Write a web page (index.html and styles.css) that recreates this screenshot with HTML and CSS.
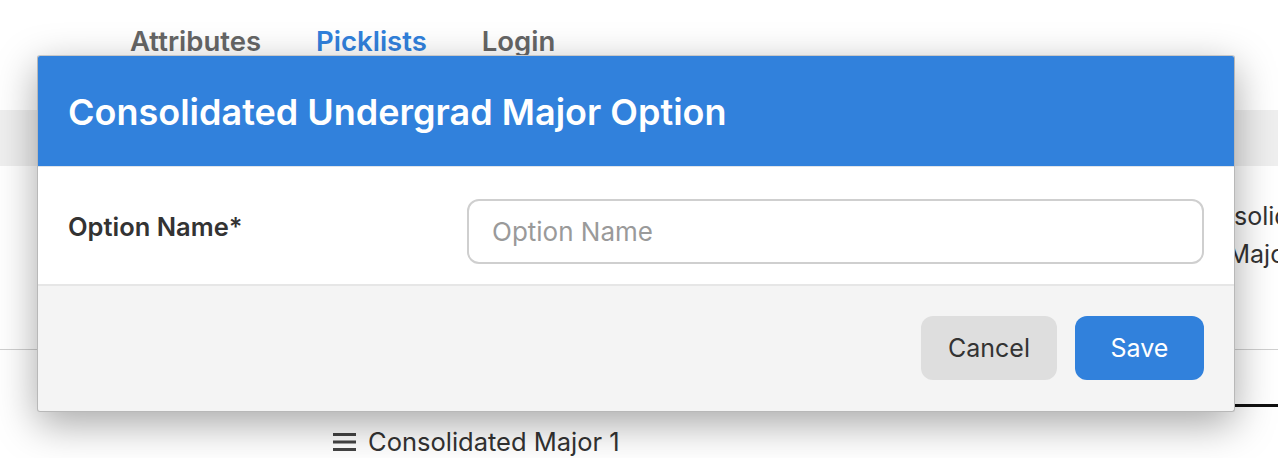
FILE: index.html
```html
<!DOCTYPE html>
<html>
<head>
<meta charset="utf-8">
<link rel="stylesheet" href="styles.css">
</head>
<body>
<div class="page">
  <nav class="tabs">
    <span class="tab">Attributes</span>
    <span class="tab active">Picklists</span>
    <span class="tab">Login</span>
  </nav>
  <div class="band"></div>
  <div class="rows">
    <div class="row row-top">
      <div class="cell-right">Consolidated<br>Major</div>
    </div>
    <div class="row row-mid"></div>
    <div class="row row-bottom">
      <div class="item">
        <svg class="burger" width="23" height="20" viewBox="0 0 23 20"><rect x="0" y="1" width="23" height="3" fill="#444"/><rect x="0" y="8.5" width="23" height="3" fill="#444"/><rect x="0" y="16" width="23" height="3" fill="#444"/></svg>
        Consolidated Major 1
      </div>
    </div>
  </div>

  <div class="modal">
    <div class="modal-header">
      <h1 class="modal-title">Consolidated Undergrad Major Option</h1>
    </div>
    <div class="modal-body">
      <label class="field-label">Option Name*</label>
      <input class="field-input" type="text" placeholder="Option Name">
    </div>
    <div class="modal-footer">
      <button class="btn btn-cancel">Cancel</button>
      <button class="btn btn-save">Save</button>
    </div>
  </div>
</div>
</body>
</html>
```

FILE: styles.css
```css
* { box-sizing: border-box; }
html, body { margin: 0; padding: 0; }
body {
  background: #fff;
  font-family: Inter, "Noto Sans", sans-serif;
  color: #333;
  width: 1278px;
  height: 458px;
  overflow: hidden;
}
.page {
  position: relative;
  width: 1278px;
  height: 458px;
}
.tabs {
  display: flex;
  gap: 55px;
  padding: 23px 0 0 130px;
  height: 110px;
}
.tab {
  font-size: 27.5px;
  font-weight: 600;
  color: #666;
  line-height: 36px;
}
.tab.active { color: #3181dc; }
.band {
  height: 56px;
  background: #efefef;
}
.rows {
  display: flex;
  flex-direction: column;
}
.row-top {
  height: 184px;
  border-bottom: 1px solid #d0d0d0;
  display: flex;
  justify-content: flex-end;
}
.cell-right {
  width: 150px;
  margin-right: -58px;
  padding-top: 31px;
  text-align: center;
  font-size: 25px;
  line-height: 38px;
  color: #333;
  white-space: nowrap;
}
.row-mid {
  height: 57px;
  border-bottom: 3px solid #111;
  margin-left: 1234px;
}
.row-bottom {
  padding: 18px 0 0 333px;
}
.item {
  font-size: 25.5px;
  line-height: 34px;
  color: #333;
  display: flex;
  align-items: center;
}
.burger {
  margin-right: 12px;
  flex: none;
}

.modal {
  position: absolute;
  left: 37px;
  top: 55px;
  width: 1198px;
  height: 357px;
  background: #f4f4f4;
  border: 1px solid #b8b8b8;
  border-top-color: #c8c8c8;
  border-radius: 3px;
  box-shadow: 0 12px 40px rgba(0, 0, 0, 0.35);
  display: flex;
  flex-direction: column;
  overflow: hidden;
}
.modal-header {
  background: #3181dc;
  height: 111px;
  display: flex;
  align-items: center;
  padding-left: 30px;
  padding-top: 1px;
  border-bottom: 1px solid #dfe4ea;
}
.modal-title {
  margin: 0;
  color: #fff;
  font-size: 36px;
  font-weight: 600;
}
.modal-body {
  background: #fff;
  height: 119px;
  display: flex;
  align-items: flex-start;
  padding: 32px 30px 0 30px;
  border-bottom: 2px solid #e6e6e6;
}
.field-label {
  width: 399px;
  font-size: 25.5px;
  font-weight: 600;
  color: #333;
  padding-top: 12px;
}
.field-input {
  width: 737px;
  height: 65px;
  border: 2px solid #cfcfcf;
  border-radius: 12px;
  padding: 0 23px;
  font-family: Inter, "Noto Sans", sans-serif;
  font-size: 26px;
  color: #333;
  background: #fff;
  outline: none;
}
.field-input::placeholder { color: #9a9a9a; }
.modal-footer {
  flex: 1;
  display: flex;
  justify-content: flex-end;
  align-items: flex-start;
  gap: 18px;
  padding: 30px 30px 0 0;
}
.btn {
  height: 64px;
  border: none;
  border-radius: 12px;
  font-family: Inter, "Noto Sans", sans-serif;
  font-size: 25px;
  font-weight: 400;
  padding: 0;
}
.btn-cancel {
  width: 136px;
  background: #dedede;
  color: #333;
}
.btn-save {
  width: 129px;
  background: #3181dc;
  color: #fff;
}
```
